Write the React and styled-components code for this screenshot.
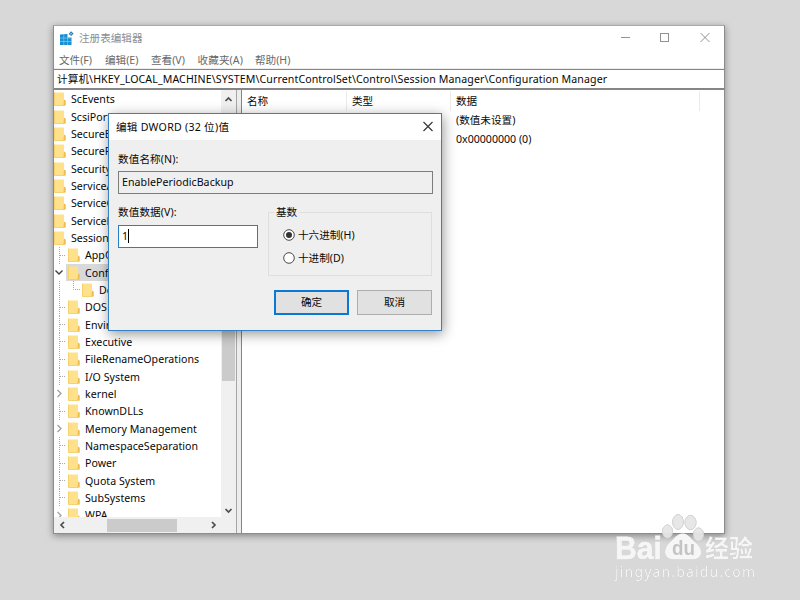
import React from "react";
import styled, { createGlobalStyle } from "styled-components";

const Global = createGlobalStyle`
  * { box-sizing: border-box; }
  html, body { margin: 0; padding: 0; overflow: hidden; }
  body {
    font-family: "Noto Sans", "Noto Sans CJK SC", sans-serif;
    font-size: 10.6px;
    line-height: 16px;
    color: #080808;
  }
`;

const Desktop = styled.div`
  position: relative;
  width: 800px;
  height: 600px;
  padding: 25px 0 0 53px;
  background: #d8d8d8;
  overflow: hidden;
`;
const Window = styled.div`
  display: flex;
  flex-direction: column;
  width: 672px;
  height: 509px;
  border: 1px solid #8c8c8c;
  border-top-color: #a8a8a8;
  background: #fff;
  box-shadow: 0 2px 7px rgba(0, 0, 0, 0.38);
`;
const Label = styled.span`
  white-space: pre;
  letter-spacing: ${(p) => p.$ls || 0}px;
`;
const TitleBar = styled.div`
  display: flex;
  align-items: center;
  height: 25px;
  padding: 0 14px 0 5px;
  color: #8e8e8e;
`;
const TitleText = styled(Label)`
  flex: 1;
  margin: -2px 0 0 5px;
`;
const Controls = styled.svg`
  width: 90px;
  height: 14px;
  margin-top: -3px;
`;
const MenuBar = styled.div`
  display: grid;
  grid-template-columns: 46px 46px 46.5px 57.5px 50px;
  align-items: center;
  height: 18px;
  padding-left: 5px;
  color: #686868;
`;
const AddressBar = styled.div`
  display: flex;
  align-items: center;
  height: 21px;
  padding: 0 0 1px 3px;
  border-top: 1px solid #858585;
  border-bottom: 2px solid #858585;
  box-shadow: 0 -1px #ececec;
`;
const Body = styled.div`
  display: flex;
  flex: 1;
  min-height: 0;
`;
const TreePane = styled.div`
  display: flex;
  flex-direction: column;
  width: 183px;
  border-right: 1px solid #a5a5a5;
`;
const TreeArea = styled.div`
  display: flex;
  flex: 1;
  min-height: 0;
`;
const Tree = styled.div`
  flex: 1;
  padding-top: 0.5px;
  overflow: hidden;
`;
const Row = styled.div`
  display: flex;
  align-items: center;
  height: 17.35px;
`;
const Branch = styled.svg`
  flex: none;
  width: ${(p) => p.$w}px;
  height: 17.35px;
`;
const Item = styled.div`
  display: flex;
  align-items: center;
  flex: 1;
  height: 17px;
  margin-left: -2px;
  padding-left: 2px;
  background: ${(p) => (p.$selected ? "#d9d9d9" : "transparent")};
`;
const FolderSvg = styled.svg`
  flex: none;
  width: 12px;
  height: 14px;
  margin-right: 5px;
`;
const VScroll = styled.div`
  display: flex;
  flex-direction: column;
  align-items: center;
  justify-content: space-between;
  width: 15px;
  padding-right: 1px;
  background: #f0f0f0;
`;
const VThumb = styled.div`
  width: 13px;
  height: 68px;
  margin-top: 86px;
  background: #cbcbcb;
`;
const HScroll = styled.div`
  display: flex;
  align-items: center;
  justify-content: space-between;
  height: 16px;
  padding: 0 17px 0 2px;
  background: #f0f0f0;
`;
const HThumb = styled.div`
  width: 70px;
  height: 13px;
  margin-left: 8px;
  background: #cbcbcb;
`;
const Arrow = styled.svg`
  flex: none;
  width: 13px;
  height: 16px;
`;
const Splitter = styled.div`
  width: 5px;
  background: #ededed;
  border-right: 1px solid #858585;
`;
const ListPane = styled.div`
  flex: 1;
  padding-top: 1px;
`;
const ListGrid = styled.div`
  display: grid;
  grid-template-columns: 105px 104px 249px;
`;
const HeadCell = styled.div`
  height: 20px;
  padding: 2px 0 0 5px;
  border-right: 1px solid #ebebeb;
`;
const DataRow = styled.div`
  height: 19px;
  padding: 1px 0 0 214px;
`;

const Dialog = styled.div`
  position: absolute;
  left: 108px;
  top: 113px;
  width: 334px;
  height: 218px;
  border: 1px solid #3481c4;
  background: #efefef;
  box-shadow: 1px 3px 12px rgba(0, 0, 0, 0.42);
`;
const DialogTitle = styled.div`
  display: flex;
  align-items: center;
  justify-content: space-between;
  height: 26px;
  padding: 0 8px 0 7px;
  background: #fff;
`;
const CloseIcon = styled.svg`
  width: 11px;
  height: 11px;
  margin-top: -2px;
`;
const DialogBody = styled.div`
  padding: 11px 9px 0 9px;
`;
const FieldLabel = styled.div`
  height: 16px;
`;
const Field = styled.div`
  display: flex;
  align-items: center;
  width: ${(p) => p.$w}px;
  height: 23px;
  margin-top: ${(p) => p.$mt || 0}px;
  padding: 0 3px 2px 3px;
  border: 1px solid ${(p) => (p.$active ? "#2580c9" : "#7d7d7d")};
  background: ${(p) => (p.$active ? "#fff" : "#efefef")};
`;
const Caret = styled.span`
  width: 1px;
  height: 14px;
  margin-top: 1px;
  background: #000;
`;
const Split = styled.div`
  display: flex;
  justify-content: space-between;
  margin-top: 10px;
`;
const Group = styled.fieldset`
  width: 164px;
  height: 72px;
  margin: 0;
  padding: 3px 0 0 14px;
  border: 1px solid #dedede;
`;
const Legend = styled.legend`
  height: 16px;
  margin-left: -9px;
  padding: 0 2px;
`;
const Radio = styled.div`
  display: flex;
  align-items: center;
  gap: 3px;
  height: 23.5px;
`;
const RadioSvg = styled.svg`
  width: 12px;
  height: 12px;
`;
const Buttons = styled.div`
  display: flex;
  justify-content: flex-end;
  gap: 8px;
  margin-top: 14px;
`;
const Button = styled.div`
  display: flex;
  align-items: center;
  justify-content: center;
  width: 75px;
  height: 25px;
  padding-bottom: 1px;
  border: ${(p) => (p.$primary ? "2px solid #0c78d4" : "1px solid #adadad")};
  background: #e1e1e1;
`;
const Watermark = styled.svg`
  position: absolute;
  left: 606px;
  top: 508px;
  width: 160px;
  height: 80px;
  filter: drop-shadow(0 0 0.7px #a8a8a8);
`;

const Folder = () => (
  <FolderSvg viewBox="0 0 12 14">
    <path d="M0 0.5h10v7.5l1.6 1v4.5H0z" fill="#ffe18b" />
    <path d="M0.4 0.5v13h9.8" fill="none" stroke="#f2ca62" strokeWidth="0.8" />
    <path d="M10 7.5l1.6 1v5H9.5z" fill="#edbd4f" />
  </FolderSvg>
);

const Chevron = ({ d }) => (
  <Arrow viewBox="0 0 13 16">
    <path d={d} fill="none" stroke="#4c4c4c" strokeWidth="1.7" />
  </Arrow>
);

const rows = [
  ["ScEvents", 0], ["ScsiPort", 0], ["SecureBoot", 0], ["SecurePipeServers", 0],
  ["SecurityProviders", 0], ["ServiceAggregated", 0], ["ServiceGroupOrder", 0],
  ["ServiceProvider", 0], ["Session Manager", 0], ["AppCompatCache", 1],
  ["Configuration Manager", 1, "open"], ["Defrag", 2], ["DOS Devices", 1],
  ["Environment", 1], ["Executive", 1], ["FileRenameOperations", 1],
  ["I/O System", 1], ["kernel", 1, "closed"], ["KnownDLLs", 1],
  ["Memory Management", 1, "closed"], ["NamespaceSeparation", 1], ["Power", 1],
  ["Quota System", 1], ["SubSystems", 1], ["WPA", 1, "closed"],
];

const TreeRow = ({ name, depth, state }) => (
  <Row>
    {depth > 0 && (
      <Branch $w={depth * 14} viewBox={`0 0 ${depth * 14} 17.35`}>
        {!state && <path d="M5.5 0V17.35" stroke="#a8a8a8" strokeDasharray="1 1" />}
        {!state && depth === 1 && <path d="M6 8.5H12" stroke="#a8a8a8" strokeDasharray="1 1" />}
        {depth === 2 && <path d="M19.5 0V8.5H26" fill="none" stroke="#a8a8a8" strokeDasharray="1 1" />}
        {state === "open" && <path d="M1.5 6.5L5 10L8.5 6.5" fill="none" stroke="#404040" strokeWidth="1.4" />}
        {state === "closed" && <path d="M3.5 5L7 8.5L3.5 12" fill="none" stroke="#a0a0a0" strokeWidth="1.3" />}
      </Branch>
    )}
    <Item $selected={state === "open"}>
      <Folder />
      <Label $ls={0.04}>{name}</Label>
    </Item>
  </Row>
);

export default function App() {
  return (
    <>
      <Global />
      <Desktop>
        <Window>
          <TitleBar>
            <svg width="15" height="15" viewBox="0 0 15 15">
              <path d="M1 3.5L8.5 3V6.5H12.5V14H1z" fill="#168fd0" />
              <path d="M1 7H12.5M1 10.5H12.5M4.8 3.3V14M8.6 3.3V14" stroke="#8fd3f1" strokeWidth="0.6" />
              <path d="M12 0.3L14.6 2.4L12.4 5L9.6 3z" fill="#2d7fae" />
              <circle cx="12.1" cy="2.7" r="0.8" fill="#a7ddf2" />
            </svg>
            <TitleText>注册表编辑器</TitleText>
            <Controls viewBox="0 0 90 14" fill="none" stroke="#929292">
              <path d="M1 7.5H10" />
              <rect x="40.5" y="3.5" width="8" height="8" />
              <path d="M80.5 3L89.5 12M89.5 3L80.5 12" />
            </Controls>
          </TitleBar>
          <MenuBar>
            <Label>文件(F)</Label>
            <Label>编辑(E)</Label>
            <Label>查看(V)</Label>
            <Label $ls={0.1}>收藏夹(A)</Label>
            <Label>帮助(H)</Label>
          </MenuBar>
          <AddressBar>
            <Label $ls={0.11}>计算机\HKEY_LOCAL_MACHINE\SYSTEM\CurrentControlSet\Control\Session Manager\Configuration Manager</Label>
          </AddressBar>
          <Body>
            <TreePane>
              <TreeArea>
                <Tree>
                  {rows.map(([name, depth, state]) => (
                    <TreeRow key={name} name={name} depth={depth} state={state} />
                  ))}
                </Tree>
                <VScroll>
                  <Chevron d="M3.5 11L6.5 8L9.5 11" />
                  <VThumb />
                  <Chevron d="M3.5 8L6.5 11L9.5 8" />
                </VScroll>
              </TreeArea>
              <HScroll>
                <Chevron d="M8 5L5 8L8 11" />
                <HThumb />
                <Chevron d="M6 5L9 8L6 11" />
              </HScroll>
            </TreePane>
            <Splitter />
            <ListPane>
              <ListGrid>
                <HeadCell>名称</HeadCell>
                <HeadCell>类型</HeadCell>
                <HeadCell>数据</HeadCell>
              </ListGrid>
              <DataRow>(数值未设置)</DataRow>
              <DataRow>0x00000000 (0)</DataRow>
            </ListPane>
          </Body>
        </Window>

        <Dialog>
          <DialogTitle>
            <Label $ls={0.26}>编辑 DWORD (32 位)值</Label>
            <CloseIcon viewBox="0 0 11 11">
              <path d="M1.5 1L10.5 10M10.5 1L1.5 10" stroke="#333" strokeWidth="1.1" />
            </CloseIcon>
          </DialogTitle>
          <DialogBody>
            <FieldLabel><Label $ls={0.1}>数值名称(N):</Label></FieldLabel>
            <Field $w={315} $mt={4}><Label $ls={0.06}>EnablePeriodicBackup</Label></Field>
            <Split>
              <div>
                <FieldLabel><Label $ls={0.1}>数值数据(V):</Label></FieldLabel>
                <Field $w={140} $mt={5} $active><Label>1</Label><Caret /></Field>
              </div>
              <Group>
                <Legend>基数</Legend>
                <Radio>
                  <RadioSvg viewBox="0 0 12 12">
                    <circle cx="6" cy="6" r="5.3" fill="#fff" stroke="#4a4a4a" />
                    <circle cx="6" cy="6" r="3" fill="#333" />
                  </RadioSvg>
                  <Label>十六进制(H)</Label>
                </Radio>
                <Radio>
                  <RadioSvg viewBox="0 0 12 12">
                    <circle cx="6" cy="6" r="5.3" fill="#fff" stroke="#4a4a4a" />
                  </RadioSvg>
                  <Label>十进制(D)</Label>
                </Radio>
              </Group>
            </Split>
            <Buttons>
              <Button $primary>确定</Button>
              <Button>取消</Button>
            </Buttons>
          </DialogBody>
        </Dialog>

        <Watermark viewBox="606 508 160 80">
          <g fill="#f6f6f6">
            <g fillOpacity="0.75" stroke="#dcdcdc" strokeWidth="0.8">
              <ellipse cx="667.5" cy="531.5" rx="5" ry="6.5" />
              <ellipse cx="678" cy="522" rx="5.3" ry="7.3" />
              <ellipse cx="690.5" cy="522.5" rx="5.5" ry="7" />
              <ellipse cx="698.5" cy="534.5" rx="5" ry="6.5" />
            </g>
            <path d="M683 533.5C688 533.5 690 538 695 542C705 550 702 559.5 693 559.5H674C664 559.5 662 550 670 542C675 538 677 533.5 683 533.5Z" />
            <text x="615" y="558.5" stroke="#f6f6f6" strokeWidth="0.9" fontFamily="Liberation Sans" fontWeight="700" fontSize="31" textLength="47" lengthAdjust="spacingAndGlyphs">Bai</text>
            <text x="672" y="554.5" fill="#c4c4c4" fontFamily="Liberation Sans" fontWeight="700" fontSize="21" textLength="23" lengthAdjust="spacingAndGlyphs">du</text>
            <text x="705" y="557" fontFamily="Noto Sans CJK SC" fontWeight="700" fontSize="24" textLength="48" lengthAdjust="spacingAndGlyphs">经验</text>
            <text x="615" y="577" fontFamily="Noto Sans" fontSize="14" textLength="140">jingyan.baidu.com</text>
          </g>
        </Watermark>
      </Desktop>
    </>
  );
}
